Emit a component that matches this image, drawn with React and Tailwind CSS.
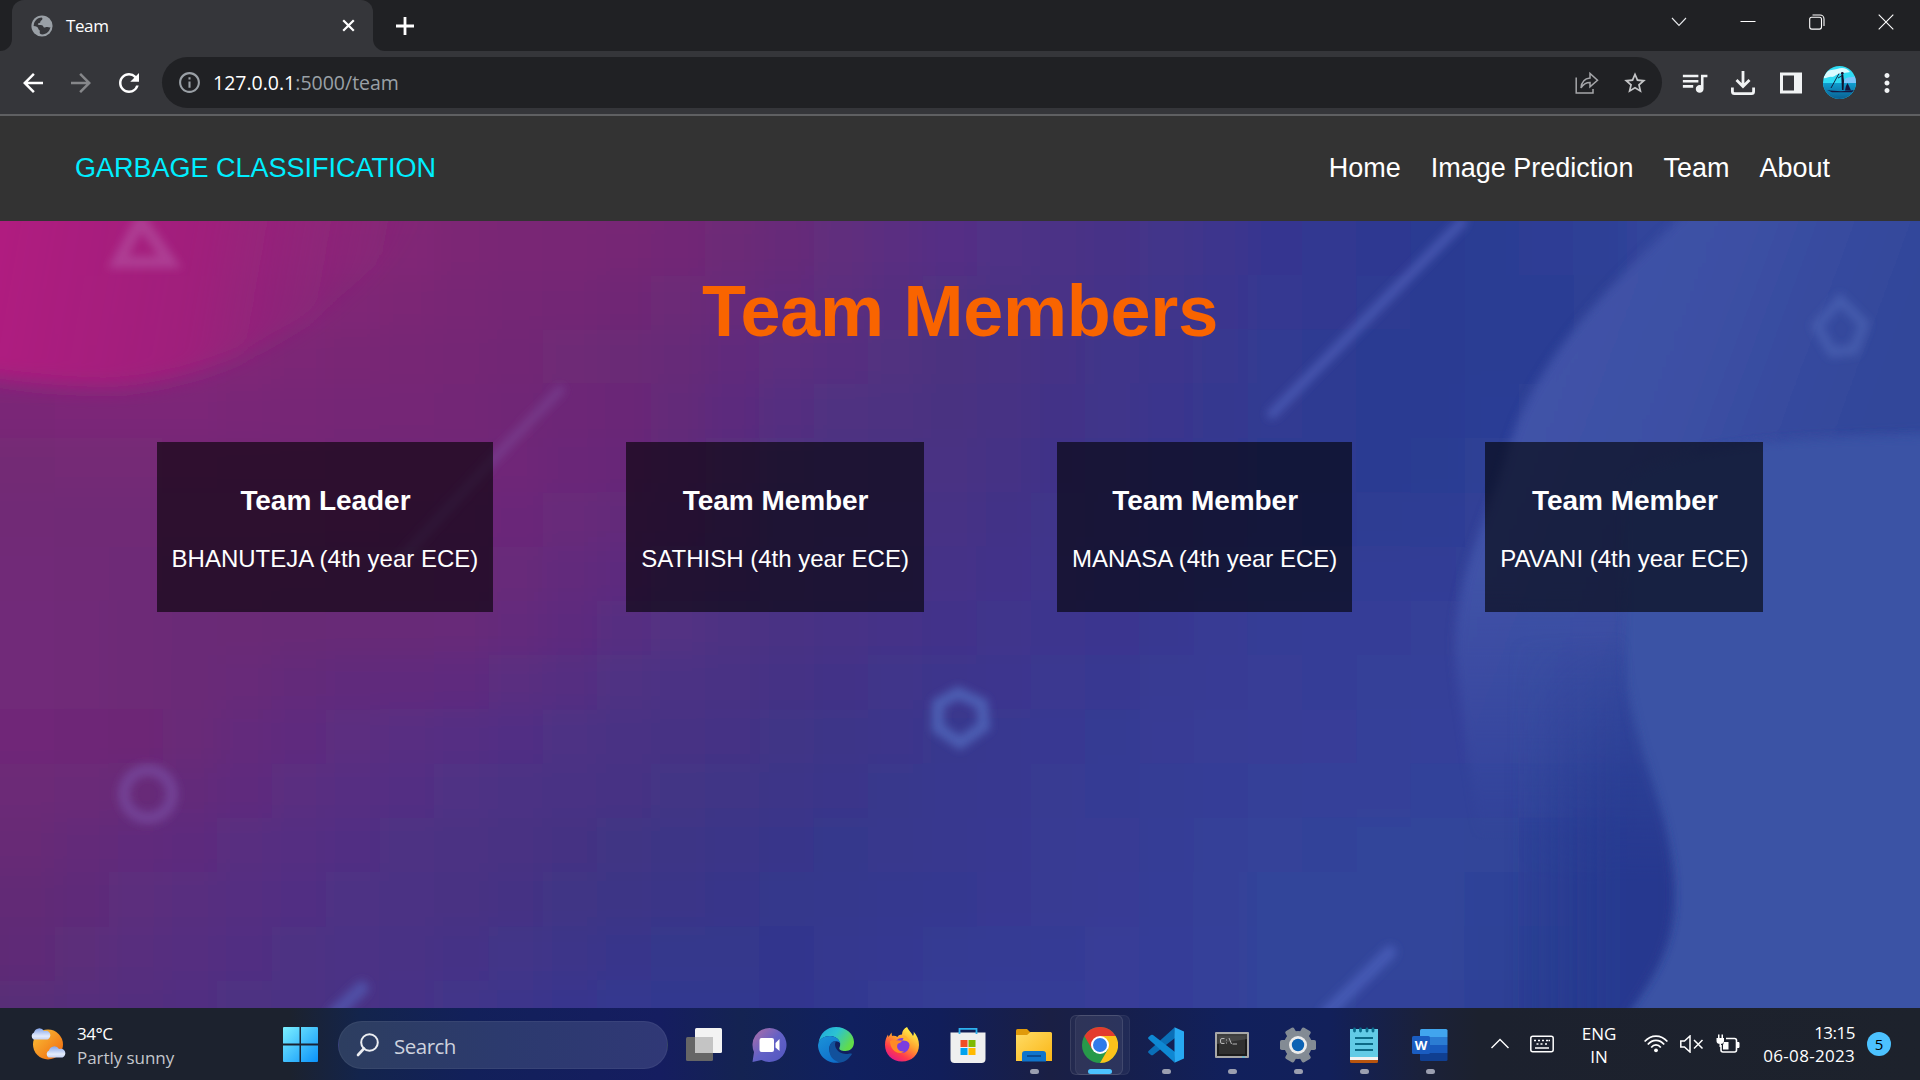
import React from "react";
import {
  MdArrowBack,
  MdArrowForward,
  MdRefresh,
  MdInfoOutline,
  MdStarBorder,
  MdQueueMusic,
  MdMoreVert,
} from "react-icons/md";

/* ---------- Page background ---------- */

const MESH = [
  "8a2478 8e247a 8e2578 7c2674 792674 672b78 552f87 483386 363590 2a3b92 2f4096 3b4fa5 3a52a6",
  "82267a 85257a 7a2675 742875 6a2976 5a2e80 4b3180 41348a 323a92 293b92 2c3f95 3a4ca2 384fa4",
  "702a74 722976 712876 702878 672878 4a3182 473283 3c348c 2e3a92 2a3c92 3548a0 33479d 3650a2",
  "72297a 6c2a77 692a75 692878 562f82 4a3184 44328a 3a368f 353d96 343f98 384a9f 3a4ca0 3851a4",
  "712878 6c2876 5c2d80 522f85 483284 3f3486 38388f 363b94 383c97 35419a 34489e 3752a4 3953a5",
  "662b74 5c2d7e 502f84 483282 3e3584 33378c 37388f 373b95 33449a 30469a 2c3f95 3953a5 3b54a6",
  "5a2c76 522f80 4a3184 42348a 323890 33368e 343c96 373c98 33449a 30439a 273a8e 3f52a6 4152a6",
].map((row) =>
  row.split(" ").map((h) => [0, 2, 4].map((i) => parseInt(h.slice(i, i + 2), 16)))
);

const BLOCK = 54.25;
const BLOCKS = [];
for (let r = -1; r < 16; r++) {
  for (let c = -1; c < 37; c++) {
    const u = Math.min(11.999, Math.max(0, ((c + 0.5) * BLOCK) / 160));
    const v = Math.min(5.999, Math.max(0, ((r + 0.5) * BLOCK) / 131.2));
    const x = Math.floor(u);
    const y = Math.floor(v);
    const fx = u - x;
    const fy = v - y;
    const rgb = [0, 1, 2].map((k) =>
      Math.round(
        (MESH[y][x][k] * (1 - fx) + MESH[y][x + 1][k] * fx) * (1 - fy) +
          (MESH[y + 1][x][k] * (1 - fx) + MESH[y + 1][x + 1][k] * fx) * fy
      )
    );
    BLOCKS.push({ x: c * BLOCK, y: 221 + r * BLOCK, fill: `rgb(${rgb.join(",")})` });
  }
}

function Backdrop() {
  return (
    <svg
      className="absolute inset-0 h-full w-full"
      viewBox="0 221 1920 787"
      preserveAspectRatio="none"
      aria-hidden="true"
    >
      <defs>
        <filter id="soft" x="-5%" y="-5%" width="110%" height="110%">
          <feGaussianBlur stdDeviation="14" />
        </filter>
        <filter id="edge" x="-20%" y="-20%" width="140%" height="140%">
          <feGaussianBlur stdDeviation="5" />
        </filter>
        <filter id="wide" x="-20%" y="-20%" width="140%" height="140%">
          <feGaussianBlur stdDeviation="10" />
        </filter>
        <filter id="haze" x="-50%" y="-50%" width="200%" height="200%">
          <feGaussianBlur stdDeviation="4" />
        </filter>
        <linearGradient id="disc" gradientUnits="userSpaceOnUse" x1="0" y1="230" x2="400" y2="300">
          <stop offset="0" stopColor="#b01e80" />
          <stop offset="0.5" stopColor="#a2207c" stopOpacity="0.9" />
          <stop offset="1" stopColor="#8a247a" stopOpacity="0" />
        </linearGradient>
        <linearGradient id="lobe" gradientUnits="userSpaceOnUse" x1="1500" y1="400" x2="1830" y2="520">
          <stop offset="0" stopColor="#4152a8" />
          <stop offset="0.5" stopColor="#3c50a4" />
          <stop offset="1" stopColor="#32469a" />
        </linearGradient>
        <linearGradient id="lobeFade" x1="0" y1="0" x2="0" y2="1">
          <stop offset="0" stopColor="#fff" />
          <stop offset="0.6" stopColor="#fff" />
          <stop offset="1" stopColor="#000" />
        </linearGradient>
        <mask id="lobeMask">
          <rect x="1380" y="180" width="600" height="660" fill="url(#lobeFade)" />
        </mask>
        <linearGradient id="wave" gradientUnits="userSpaceOnUse" x1="1510" y1="0" x2="1675" y2="0">
          <stop offset="0" stopColor="#273a8f" stopOpacity="0" />
          <stop offset="0.6" stopColor="#273a90" />
          <stop offset="1" stopColor="#25378e" />
        </linearGradient>
        <linearGradient id="waveFade" x1="0" y1="0" x2="0" y2="1">
          <stop offset="0" stopColor="#000" />
          <stop offset="0.6" stopColor="#fff" />
          <stop offset="1" stopColor="#fff" />
        </linearGradient>
        <mask id="waveMask">
          <rect x="1400" y="620" width="400" height="440" fill="url(#waveFade)" />
        </mask>
      </defs>
      <g filter="url(#soft)">
        {BLOCKS.map((b, i) => (
          <rect key={i} x={b.x} y={b.y} width="55" height="55" fill={b.fill} />
        ))}
      </g>
      <path d="M-40 180H440C380 290 250 378 110 387C50 386 20 382 -40 372Z" fill="url(#disc)" filter="url(#wide)" />
      <g mask="url(#lobeMask)">
        <path
          d="M1700 200C1600 290 1530 370 1508 450C1492 510 1455 570 1455 650C1460 720 1472 760 1480 860H1630C1612 700 1618 560 1700 450C1770 436 1850 436 1940 432V200Z"
          fill="url(#lobe)"
          filter="url(#edge)"
        />
      </g>
      <path d="M1624 480C1700 436 1820 440 1940 436V1030H1610C1650 985 1674 950 1674 900C1674 820 1640 780 1626 690Z" fill="#3a53a5" filter="url(#edge)" />
      <g mask="url(#waveMask)">
        <path d="M1500 640H1622C1628 740 1672 810 1673 890C1674 950 1650 980 1615 1030H1420C1500 960 1500 800 1500 640Z" fill="url(#wave)" filter="url(#edge)" />
      </g>
      <g fill="none" strokeLinecap="round" filter="url(#haze)">
        <path d="M140 222L118 262H170L142 222" stroke="#b453a2" strokeOpacity="0.6" strokeWidth="12" />
        <path d="M560 390L500 452L400 560" stroke="#7d4b9a" strokeOpacity="0.5" strokeWidth="10" />
        <path d="M1462 222L1272 414" stroke="#4a5bb4" strokeOpacity="0.85" strokeWidth="10" />
        <path d="M1840 300L1864 324L1854 350L1832 352L1817 326Z" stroke="#5068b8" strokeOpacity="0.6" strokeWidth="10" />
        <path d="M958 693L982 704L984 726L960 743L938 728L938 704Z" stroke="#4e60b4" strokeOpacity="0.95" strokeWidth="12" />
        <circle cx="148" cy="794" r="24" stroke="#77489c" strokeOpacity="0.8" strokeWidth="12" />
        <path d="M362 988L334 1014" stroke="#5358b0" strokeOpacity="0.75" strokeWidth="14" />
        <path d="M1390 952L1326 1014" stroke="#4a5fba" strokeOpacity="0.8" strokeWidth="13" />
      </g>
    </svg>
  );
}

/* ---------- Browser chrome ---------- */

function TabStrip() {
  return (
    <div className="flex h-[51px] items-stretch bg-[#202124]">
      <div className="flex w-[12px] items-end bg-[#35363a]">
        <div className="h-full w-full rounded-br-[12px] bg-[#202124]" />
      </div>
      <div className="w-[361px] bg-[#202124]">
        <div className="flex h-full items-center rounded-t-[12px] bg-[#35363a] pl-[19px] pr-[18px]">
          <svg className="h-[22px] w-[22px]" viewBox="0 0 22 22">
            <circle cx="11" cy="11" r="10.6" fill="#9aa0a6" />
            <path
              d="M3 8.5C4 5 7 2.6 10.5 2.4C12 3 11.5 4.5 10.5 5.2C9 6 9.7 7 9 7.8C8 8.5 7 8 6.8 9.3C7 10.4 9 10 11 10.3C12.5 10.7 12 12 13 12.5C14.5 12.6 15 11.6 16.5 12C18 12.4 19 12.6 19.4 12C18.8 16.2 15.4 19.3 11.2 19.5C8.5 19.3 8.6 17.5 8.8 16.5C9.2 15 7.5 15 7.2 13.5C7 12 5 11.2 2.6 10.9Z"
              fill="#35363a"
            />
          </svg>
          <span className="ml-[13px] flex-1 text-[17px] leading-[24px] tracking-[-0.4px] text-white">Team</span>
          <svg className="h-[13px] w-[13px]" viewBox="0 0 14 14" stroke="#fff" strokeWidth="2.4">
            <path d="M1.3 1.3L12.7 12.7M12.7 1.3L1.3 12.7" />
          </svg>
        </div>
      </div>
      <div className="w-[12px] bg-[#35363a]">
        <div className="h-full w-full rounded-bl-[12px] bg-[#202124]" />
      </div>
      <div className="flex flex-1 items-center pl-[11px]">
        <svg className="h-[18px] w-[18px]" viewBox="0 0 18 18" stroke="#fff" strokeWidth="2.8">
          <path d="M9 0V18M0 9H18" />
        </svg>
      </div>
      <div className="flex h-[43px] items-center gap-[53px] pr-[26px]">
        <svg className="h-[16px] w-[16px]" viewBox="0 0 16 16" fill="none" stroke="#e8eaed" strokeWidth="1.1">
          <path d="M1 4L8 11.5L15 4" />
        </svg>
        <svg className="h-[16px] w-[16px]" viewBox="0 0 16 16" stroke="#fff" strokeWidth="1">
          <path d="M0.5 7.5H15.5" />
        </svg>
        <svg className="h-[16px] w-[16px]" viewBox="0 0 16 16" fill="none" stroke="#fff" strokeWidth="1.1">
          <rect x="0.7" y="3.3" width="11.8" height="11.8" rx="2" />
          <path d="M3.5 1H11A4 4 0 0 1 15 5V12" />
        </svg>
        <svg className="h-[16px] w-[16px]" viewBox="0 0 16 16" stroke="#fff" strokeWidth="1.1">
          <path d="M0.7 0.7L15.3 15.3M15.3 0.7L0.7 15.3" />
        </svg>
      </div>
    </div>
  );
}

function Avatar() {
  return (
    <svg className="ml-[21px] h-[33px] w-[33px]" viewBox="0 0 33 33">
      <defs>
        <clipPath id="av">
          <circle cx="16.5" cy="16.5" r="16.5" />
        </clipPath>
        <linearGradient id="sea" x1="0" y1="0" x2="0" y2="1">
          <stop offset="0" stopColor="#0f9fd0" />
          <stop offset="1" stopColor="#0a5f92" />
        </linearGradient>
      </defs>
      <g clipPath="url(#av)">
        <rect width="33" height="33" fill="#2fdcf4" />
        <path d="M3 7C6 3 11 4 14 3C19 1 24 2 27 6C24 7 22 6 19 8C14 7 12 11 9 11C6 10 3 13 0 12Z" fill="#d9fbff" />
        <path d="M22 13C26 10 30 12 33 10V17H20Z" fill="#7cc4fa" />
        <rect y="17" width="33" height="16" fill="url(#sea)" />
        <path d="M4 24C12 25.500 24 25.500 31 24L29 26.300H9Z" fill="#16163f" />
        <path d="M18.300 9L20.300 9L21 15L20.500 24H19L18.600 16Z" fill="#121230" />
        <circle cx="19.300" cy="7.500" r="1.400" fill="#121230" />
        <path d="M18.600 10L15 12M16 7.500L8 22" fill="none" stroke="#121230" strokeWidth="0.900" />
        <path d="M22 24.500L23 20L24.500 17L26 20L28 24.500Z" fill="#16163f" />
      </g>
    </svg>
  );
}

function Toolbar() {
  return (
    <div className="flex h-[65px] items-center border-b-2 border-[#5f6062] bg-[#35363a] pl-[18px]">
      <div className="flex items-center gap-[18px] text-white">
        <MdArrowBack className="h-[30px] w-[30px]" />
        <MdArrowForward className="h-[30px] w-[30px] text-[#86878a]" />
        <MdRefresh className="h-[30px] w-[30px]" />
      </div>
      <div className="ml-[18px] flex h-[51px] w-[1500px] items-center rounded-full bg-[#202124] pl-[15px] pr-[14px]">
        <MdInfoOutline className="h-[25px] w-[25px] text-[#9aa0a6]" />
        <span className="ml-[11px] flex-1 text-[19.5px] leading-[28px] text-[#9aa0a6]">
          <span className="text-white">127.0.0.1</span>:5000/team
        </span>
        <svg className="h-[24px] w-[24px]" viewBox="0 0 24 24" fill="none" stroke="#a5a6a9" strokeWidth="1.5">
          <path d="M1.200 6.500V22H18V18" />
          <path d="M6 17C6.500 11 9.500 7.500 15 7V2.500L22.500 9.200L15 15.800V11.500C10.500 11.500 8 13.500 6 17Z" />
        </svg>
        <MdStarBorder className="ml-[23px] h-[26px] w-[26px] text-[#c4c5c7]" />
      </div>
      <div className="ml-[17px] flex flex-1 items-center text-[#f1f3f4]">
        <MdQueueMusic className="h-[31px] w-[31px]" />
        <svg className="ml-[21px] h-[24px] w-[24px]" viewBox="0 0 24 24" fill="none" stroke="currentColor" strokeWidth="2.8">
          <path d="M12 0V14.500M5.500 9L12 15.500L18.500 9" />
          <path d="M1.400 16.500V20.500Q1.400 22.600 3.500 22.600H20.500Q22.600 22.600 22.600 20.500V16.500" />
        </svg>
        <svg className="ml-[25px] h-[22px] w-[22px]" viewBox="0 0 22 22">
          <path fillRule="evenodd" d="M0 0.500H22V21.500H0ZM3 3.500V18.500H14V3.500Z" fill="currentColor" />
        </svg>
        <Avatar />
        <MdMoreVert className="ml-[16px] h-[30px] w-[30px]" />
      </div>
    </div>
  );
}

/* ---------- Page ---------- */

const LINKS = ["Home", "Image Prediction", "Team", "About"];

const TEAM = [
  { role: "Team Leader", name: "BHANUTEJA (4th year ECE)" },
  { role: "Team Member", name: "SATHISH (4th year ECE)" },
  { role: "Team Member", name: "MANASA (4th year ECE)" },
  { role: "Team Member", name: "PAVANI (4th year ECE)" },
];

function Page() {
  return (
    <div className="flex flex-1 flex-col font-['Liberation_Sans',Arial,sans-serif]">
      <nav className="flex h-[105px] items-center justify-between bg-[#333333] px-[75px] pb-[2px] text-[27px] leading-[30px]">
        <span className="text-[#00eeff]">GARBAGE CLASSIFICATION</span>
        <div className="flex gap-[30px] pr-[15px] text-white">
          {LINKS.map((l) => (
            <a key={l}>{l}</a>
          ))}
        </div>
      </nav>
      <main className="relative flex-1 overflow-hidden">
        <Backdrop />
        <div className="relative flex flex-col items-center">
          <h1 className="mt-[49px] text-[72px] leading-[82px] font-bold tracking-[-0.25px] text-[#f96400]">Team Members</h1>
          <div className="mt-[90px] flex justify-center gap-[133px]">
            {TEAM.map((m) => (
              <div key={m.name} className="flex h-[170px] flex-col items-center bg-black/60 px-[15px] pt-[43px] text-white">
                <h3 className="pl-px text-[28px] leading-[32px] font-bold tracking-[-0.05px] whitespace-nowrap">{m.role}</h3>
                <p className="mt-[28px] text-[24px] leading-[27px] whitespace-nowrap">{m.name}</p>
              </div>
            ))}
          </div>
        </div>
      </main>
    </div>
  );
}

/* ---------- Taskbar ---------- */

function Weather() {
  const cloud = "M4 12.500A4 4 0 0 1 4.500 5.500A5.500 5.500 0 0 1 14.500 4A4.500 4.500 0 0 1 18 12.500Z";
  return (
    <svg className="h-[36px] w-[38px]" viewBox="0 0 38 36">
      <defs>
        <linearGradient id="sun" x1="0" y1="0" x2="1" y2="1">
          <stop offset="0.2" stopColor="#f8b030" />
          <stop offset="1" stopColor="#f0640c" />
        </linearGradient>
        <linearGradient id="cl" x1="0" y1="0" x2="0" y2="1">
          <stop offset="0" stopColor="#86a6ea" />
          <stop offset="0.7" stopColor="#e4ecfc" />
          <stop offset="1" stopColor="#c4d2f4" />
        </linearGradient>
      </defs>
      <circle cx="19" cy="18.500" r="15" fill="url(#sun)" />
      <path d={cloud} fill="url(#cl)" transform="translate(0.500 1)" />
      <path d={cloud} fill="url(#cl)" transform="translate(15.500 19)" />
    </svg>
  );
}

function TaskView() {
  return (
    <svg className="h-9 w-9" viewBox="0 0 36 36">
      <rect x="9" y="1" width="27" height="25" rx="1.500" fill="#f3f3f3" />
      <rect x="0" y="10" width="27" height="24" rx="1.500" fill="#666" />
      <rect x="9" y="10" width="18" height="16" fill="#c4c4c4" />
    </svg>
  );
}

function Chat() {
  return (
    <svg className="h-9 w-9" viewBox="0 0 36 36">
      <defs>
        <linearGradient id="chat" x1="0" y1="0" x2="1" y2="1">
          <stop offset="0.1" stopColor="#a26cab" />
          <stop offset="0.5" stopColor="#6261c6" />
          <stop offset="1" stopColor="#5256c0" />
        </linearGradient>
      </defs>
      <path d="M17.500 1A17 17 0 1 1 9.500 33L0.500 35L2 25A17 17 0 0 1 17.500 1Z" fill="url(#chat)" />
      <rect x="7.500" y="11" width="14.500" height="14" rx="2" fill="#fff" />
      <path d="M23.500 16L27.500 12V24L23.500 20.500Z" fill="#fff" />
    </svg>
  );
}

function Edge() {
  return (
    <svg className="h-9 w-9" viewBox="0 0 36 36">
      <defs>
        <linearGradient id="e1" x1="0" y1="0" x2="1" y2="0.5">
          <stop offset="0" stopColor="#1fa5dd" />
          <stop offset="0.5" stopColor="#2cc3d2" />
          <stop offset="1" stopColor="#62dc4a" />
        </linearGradient>
        <linearGradient id="e2" x1="0" y1="0" x2="0.6" y2="1">
          <stop offset="0" stopColor="#1b93d8" />
          <stop offset="1" stopColor="#0f6fcb" />
        </linearGradient>
      </defs>
      <path d="M0.500 16C2 6 9 0 18 0C28 0 36 7 36 15C36 21 32 24 27.500 24C23 24 20.500 22.500 21.500 20.500C24 16 20 9 12 9C6 9 2 12 0.500 16Z" fill="url(#e1)" />
      <path d="M0 18C1 12 6 9 12 9C18 9 22 13 22.500 17C21 13 13 13 11.500 20C10 28 18 34 25 34C22 36 15 37 9 33.500C3 30 0 24 0 18Z" fill="url(#e2)" />
      <path d="M11.500 20C12.500 14.500 16 13.500 18 14.500C15 18 19 27 28 27C31 27 33 26 34 27C31 32 27 35 22 35.500C15 34 10 28 11.500 20Z" fill="#12519c" />
    </svg>
  );
}

function Firefox() {
  return (
    <svg className="h-9 w-9" viewBox="0 0 36 36">
      <defs>
        <linearGradient id="ff" x1="0.85" y1="0.05" x2="0.25" y2="1">
          <stop offset="0.1" stopColor="#ffe845" />
          <stop offset="0.45" stopColor="#ff9a2e" />
          <stop offset="0.75" stopColor="#ff3b4b" />
          <stop offset="1" stopColor="#e01690" />
        </linearGradient>
      </defs>
      <path d="M23 0C25 4 28 6 29 9C30 7 30 6 29.500 4.500C33 8 35 13 35 18C35 28 27.500 34.500 18 34.500C8 34.500 1 27 1 18C1 13 2.500 10 4 7.500L4.500 10L7.500 5.500L8 9C10 8.500 12 9 13.500 10C14 8.500 15.500 7.500 18 7.500C18 4 20 1.500 23 0Z" fill="url(#ff)" />
      <circle cx="18" cy="18.500" r="7.500" fill="#7a3ee0" />
      <path d="M6 14C9 12 13 14 18 13.500C17.500 16 14 16 13.500 17.500C12 21 15 25 20 24.500C14 29 6 23 6 14Z" fill="#ff8a25" />
      <path d="M18 8C22 8 26 12 26 17C24 14 21 13 18 13.500C20 12 20 10 18 8Z" fill="#ffb52e" />
    </svg>
  );
}

function Store() {
  return (
    <svg className="h-9 w-9" viewBox="0 0 36 36">
      <path d="M0.500 5.500H35.500V32Q35.500 36 31.500 36H4.500Q0.500 36 0.500 32Z" fill="#efefef" />
      <path d="M9.500 7V1.800H26.500V7" fill="none" stroke="#2db2f0" strokeWidth="1.800" />
      <rect x="10.500" y="13" width="7" height="7" fill="#f04e23" />
      <rect x="18.500" y="13" width="7" height="7" fill="#7fba00" />
      <rect x="10.500" y="21" width="7" height="7" fill="#00a3ee" />
      <rect x="18.500" y="21" width="7" height="7" fill="#ffb900" />
    </svg>
  );
}

function Folder() {
  return (
    <svg className="h-9 w-9" viewBox="0 0 36 36">
      <defs>
        <linearGradient id="fo" x1="0" y1="0" x2="1" y2="1">
          <stop offset="0" stopColor="#ffdc66" />
          <stop offset="1" stopColor="#fbb615" />
        </linearGradient>
      </defs>
      <path d="M0 3.500Q0 2 1.500 2H11L15 6V12H0Z" fill="#e09a0a" />
      <path d="M0 8H11L14.500 5H34.500Q36 5 36 6.500V34H0Z" fill="url(#fo)" />
      <path d="M6 34.500V27Q6 24 9 24H27Q30 24 30 27V34.500Z" fill="#0f74cc" />
      <path d="M11 29H25" stroke="#0a4c92" strokeWidth="2" />
    </svg>
  );
}

function Chrome() {
  return (
    <svg className="h-9 w-9" viewBox="0 0 36 36">
      <circle cx="18" cy="18" r="18" fill="#27994a" />
      <path d="M18 9H33.600A18 18 0 0 1 18 36L25.800 22.500Z" fill="#fcc21b" />
      <path d="M2.400 9A18 18 0 0 1 33.600 9H18L10.200 22.500Z" fill="#e33b2e" />
      <circle cx="18" cy="18" r="9" fill="#fff" />
      <circle cx="18" cy="18" r="7" fill="#2f7bea" />
    </svg>
  );
}

function Code() {
  return (
    <svg className="h-9 w-9" viewBox="0 0 36 36">
      <path d="M26.500 0.500L0.500 24Q-0.300 25.200 0.600 26L3 28Q4 28.500 5 28L27 11Z" fill="#0a6fb8" />
      <path d="M26.500 35.500L0.500 12Q-0.300 10.800 0.600 10L3 8Q4 7.500 5 8L27 25Z" fill="#0e88d3" />
      <path d="M26.500 0.300L36 4.500V31.500L26.500 35.700Z" fill="#27a9f2" />
    </svg>
  );
}

function Terminal() {
  return (
    <svg className="h-9 w-9" viewBox="0 0 36 36">
      <rect x="1" y="5" width="34" height="26" rx="1" fill="#a8a8a8" />
      <rect x="3" y="7" width="30" height="22" fill="#1c1c1c" />
      <rect x="5" y="9" width="26" height="18" fill="#303030" />
      <path d="M3 7H33V12L3 17Z" fill="#555" fillOpacity="0.6" />
      <path d="M10.500 11.500H8Q6.500 11.500 6.500 13V15Q6.500 16.500 8 16.500H10.500M12.500 12.500V13.500M12.500 15.500V16.500M15 11L17.500 17M18.500 17H23" fill="none" stroke="#b5b5b5" strokeWidth="1" />
      <path d="M28 30H31" stroke="#3cc0ea" strokeWidth="1" />
    </svg>
  );
}

function Gear() {
  return (
    <svg className="h-9 w-9" viewBox="0 0 36 36">
      <g fill="#838b94">
        {[0, 60, 120].map((a) => (
          <rect key={a} x="0" y="13" width="36" height="10" rx="1.800" transform={`rotate(${a} 18 18)`} />
        ))}
        <circle cx="18" cy="18" r="14" />
      </g>
      <circle cx="18" cy="18" r="9" fill="#ececec" />
      <circle cx="18" cy="18" r="6.200" fill="#0c62b4" />
    </svg>
  );
}

function Notepad() {
  return (
    <svg className="h-9 w-9" viewBox="0 0 36 36">
      <path d="M4 2H32V31H4Z" fill="#62cbe6" />
      <path d="M4 30H32V33H4Z" fill="#f2f2f2" />
      <path d="M4 33H32V34.500Q32 36 30.500 36H5.500Q4 36 4 34.500Z" fill="#b8540e" />
      <path d="M9 11H27M9 17H27M9 23H27" stroke="#0b6a86" strokeWidth="1.800" />
      <path d="M8.500 2V4M14.500 2V4M21 2V4M27 2V4" stroke="#0a6c8c" strokeWidth="2.800" strokeLinecap="round" />
    </svg>
  );
}

function Word() {
  return (
    <svg className="h-9 w-9" viewBox="0 0 36 36">
      <path d="M8 3.500Q8 2 9.500 2H34Q35.500 2 35.500 3.500V10H8Z" fill="#41a5ee" />
      <path d="M8 10H35.500V18H8Z" fill="#2b7cd3" />
      <path d="M8 18H35.500V26H8Z" fill="#185abd" />
      <path d="M8 26H35.500V32.500Q35.500 34 34 34H9.500Q8 34 8 32.500Z" fill="#103f91" />
      <rect x="0" y="9" width="18" height="18" rx="1.600" fill="#1a5cc0" />
      <text x="9" y="22.500" textAnchor="middle" fontSize="13" fontWeight="700" fill="#fff" className="font-['Open_Sans',sans-serif]">
        W
      </text>
    </svg>
  );
}

const APPS = [
  { icon: TaskView },
  { icon: Chat },
  { icon: Edge },
  { icon: Firefox },
  { icon: Store },
  { icon: Folder, open: true },
  { icon: Chrome, active: true },
  { icon: Code, open: true },
  { icon: Terminal, open: true },
  { icon: Gear, open: true },
  { icon: Notepad, open: true },
  { icon: Word, open: true },
];

function AppButton({ icon: Icon, open, active }) {
  return (
    <div className="relative flex h-full w-[66px] flex-col items-center pt-[19px]">
      {active && (
        <>
          <div className="absolute top-[7px] left-[8px] h-[60px] w-[55px] rounded-[6px] border border-white/5 bg-white/5" />
          <div className="absolute top-[7px] left-[3px] h-[60px] w-[53px] rounded-[6px] border border-white/10 bg-white/5" />
        </>
      )}
      <div className="relative">
        <Icon />
      </div>
      {open && <div className="mt-[6px] h-[5px] w-[9px] rounded-full bg-[#9b9fb0]" />}
      {active && <div className="relative mt-[6px] h-[5px] w-[24px] rounded-full bg-[#4cc2ff]" />}
    </div>
  );
}

function Taskbar() {
  return (
    <div className="flex h-[72px] items-center bg-[linear-gradient(90deg,#1c222e_0px,#1c222e_290px,#13244c_360px,#12205a_470px,#151d60_660px,#142352_740px,#10205f_850px,#111e5a_940px,#1a1f44_1050px,#161f4c_1120px,#11205c_1230px,#12205a_1330px,#1b2138_1430px,#1c212e_1480px,#1d222c_1920px)] text-white">
      <div className="ml-[29px] flex w-[254px] items-center">
        <Weather />
        <div className="ml-[10px] pt-[3px] text-[17px] leading-[24px] whitespace-nowrap">
          <div className="tracking-[-0.5px]">34°C</div>
          <div className="tracking-[-0.05px] text-[#c4c7cc]">Partly sunny</div>
        </div>
      </div>
      <svg className="h-[35px] w-[35px]" viewBox="0 0 35 35">
        <defs>
          <linearGradient id="win" gradientUnits="userSpaceOnUse" x1="0" y1="0" x2="35" y2="35">
            <stop offset="0" stopColor="#7cf0ff" />
            <stop offset="1" stopColor="#0a92fa" />
          </linearGradient>
        </defs>
        <path d="M0 1Q0 0 1 0H16.500V16.500H0ZM18 0H34Q35 0 35 1V16.500H18ZM0 18.500H16.500V35H1Q0 35 0 34ZM18 18.500H35V34Q35 35 34 35H18Z" fill="url(#win)" />
      </svg>
      <div className="mt-[2px] ml-[20px] flex h-[48px] w-[330px] items-center rounded-full border border-white/5 bg-[linear-gradient(90deg,#2d3e60,#2c3a6e_50%,#303876)] pl-[17px]">
        <svg className="h-[24px] w-[24px]" viewBox="0 0 24 24" fill="none" stroke="#eceef2">
          <circle cx="13.500" cy="9.500" r="8.300" strokeWidth="2" />
          <path d="M8 15.500L2 22" strokeWidth="2.600" strokeLinecap="round" />
        </svg>
        <span className="ml-[14px] pt-px text-[20.5px] leading-[28px] tracking-[-0.5px] text-[#ced2de]">Search</span>
      </div>
      <div className="ml-[3px] flex h-full w-[792px]">
        {APPS.map((a, i) => (
          <AppButton key={i} {...a} />
        ))}
      </div>
      <div className="flex flex-1 items-center pl-[28px] text-[17px] leading-[23px]">
        <svg className="h-[12px] w-[18px]" viewBox="0 0 18 12" fill="none" stroke="#fff" strokeWidth="1.400">
          <path d="M0.500 10L9 1.500L17.500 10" />
        </svg>
        <svg className="ml-[21px] h-[18px] w-[24px]" viewBox="0 0 24 18" fill="none" stroke="#fff" strokeWidth="1.500">
          <rect x="0.800" y="1.300" width="22.400" height="15.400" rx="2" />
          <path d="M4 5.500H6M8 5.500H10M12 5.500H14M16 5.500H18M18.500 5.500H20M6.500 9H8.500M10.500 9H12.500M15 9H17M5 13H19" />
        </svg>
        <div className="ml-[24px] w-[42px] pt-px text-center">
          <div>ENG</div>
          <div>IN</div>
        </div>
        <svg className="ml-[24px] h-[18px] w-[24px]" viewBox="0 0 24 18" fill="none" stroke="#fff" strokeWidth="1.700">
          <path d="M0.600 6.500C7 -0.800 17 -0.800 23.400 6.500M3.800 9.500C8.500 4 15.500 4 20.200 9.500M7.200 12.500C10 9 14 9 16.800 12.500" />
          <circle cx="12" cy="15.300" r="1.900" fill="#fff" stroke="none" />
        </svg>
        <svg className="ml-[12px] h-[18px] w-[24px]" viewBox="0 0 24 18" fill="none" stroke="#fff" strokeWidth="1.500">
          <path d="M0.800 6V12H4.500L10 17V1L4.500 6Z" />
          <path d="M14 5L22.500 13.500M22.500 5L14 13.500" />
        </svg>
        <svg className="ml-[12px] h-[20px] w-[24px]" viewBox="0 0 24 20" fill="none" stroke="#fff" strokeWidth="1.600">
          <path d="M10 4.500H18.500Q20.500 4.500 20.500 6.500V16Q20.500 18 18.500 18H7Q5 18 5 16V11" />
          <path d="M21 8.500H23V13.500H21Z" fill="#fff" strokeWidth="1" />
          <path d="M8 8H12.500V15.500H7V11Z" fill="#fff" stroke="none" />
          <path d="M0.500 4H8V7Q8 10 4.200 10Q0.500 10 0.500 7ZM2 0.500H3.500V4H2ZM5.500 0.500H7V4H5.500ZM3.500 9H5V13H3.500Z" fill="#fff" stroke="none" />
        </svg>
        <div className="ml-auto text-right">
          <div className="tracking-[-0.5px]">13:15</div>
          <div className="tracking-[0.3px]">06-08-2023</div>
        </div>
        <div className="mr-[29px] ml-[12px] flex h-[24px] w-[24px] items-center justify-center rounded-full bg-[#4cc2ff] text-[15px] text-black">
          5
        </div>
      </div>
    </div>
  );
}

export default function App() {
  return (
    <div className="flex h-[1080px] w-[1920px] flex-col overflow-hidden bg-[#35363a] font-['Open_Sans','Noto_Sans',sans-serif]">
      <TabStrip />
      <Toolbar />
      <Page />
      <Taskbar />
    </div>
  );
}
